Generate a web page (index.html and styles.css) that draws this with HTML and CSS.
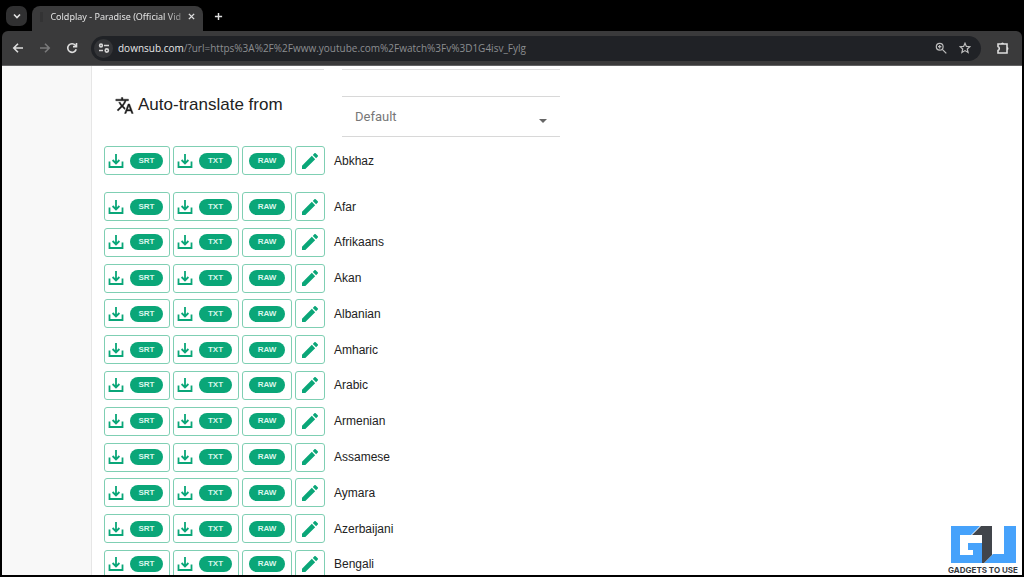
FILE: index.html
```html
<!DOCTYPE html>
<html lang="en">
<head>
<meta charset="utf-8">
<meta name="viewport" content="width=device-width, initial-scale=1">
<title>Coldplay - Paradise (Official Video)</title>
<link rel="stylesheet" href="styles.css">
<script src="app.js" defer></script>
</head>
<body>
<svg class="sprite" aria-hidden="true">
  <symbol id="i-download" viewBox="0 0 16 16"><path d="M1.500 8.500v5.500h13V8.500M8 1v9M4.600 7 8 10.400 11.400 7" fill="none" stroke="currentColor" stroke-width="1.8"/></symbol>
  <symbol id="i-pencil" viewBox="3 3 18 18"><path fill="currentColor" d="M3 17.25V21h3.75L17.81 9.94l-3.75-3.75L3 17.25zM20.71 7.04a1 1 0 0 0 0-1.41l-2.34-2.34a1 1 0 0 0-1.41 0l-1.83 1.83 3.75 3.75 1.83-1.83z"/></symbol>
</svg>
<div class="browser">
  <header class="tabs">
    <button class="tab-search" aria-label="Search tabs"><svg viewBox="0 0 10 10"><path d="m2 3.5 3 3 3-3"/></svg></button>
    <div class="tab">
      <span class="favicon"></span>
      <span class="tab-title">Coldplay - Paradise (Official Vid</span>
      <button class="plain" aria-label="Close tab"><svg class="x" viewBox="0 0 8 8"><path d="m1 1 6 6M7 1 1 7"/></svg></button>
    </div>
    <button class="plain new-tab" aria-label="New tab"><svg viewBox="0 0 10 10"><path d="M5 1v8M1 5h8"/></svg></button>
  </header>
  <nav class="toolbar">
    <button class="plain" aria-label="Back"><svg viewBox="0 0 12 12"><path d="M11 6H2M6 1.8 1.8 6 6 10.2"/></svg></button>
    <button class="plain dim" aria-label="Forward"><svg viewBox="0 0 12 12"><path d="M1 6h9M6 1.8 10.2 6 6 10.2"/></svg></button>
    <button class="plain" aria-label="Reload"><svg viewBox="0 0 12 12"><path d="M10.2 7.2A4.3 4.3 0 1 1 9.4 3.3L10 4"/><path d="M10.5 1v3.6H7" /></svg></button>
    <div class="address">
      <button class="site-info" aria-label="Site information"><svg viewBox="0 0 12 12"><circle cx="3" cy="3.5" r="1.4"/><path d="M6 3.5h5M1 8.5h4"/><circle cx="8.8" cy="8.5" r="1.6"/></svg></button>
      <a class="url" href="#"><b>downsub.com</b>/?url=https%3A%2F%2Fwww.youtube.com%2Fwatch%3Fv%3D1G4isv_Fylg</a>
      <button class="plain" aria-label="Zoom"><svg viewBox="0 0 12 12"><circle cx="4.7" cy="4.7" r="3.4"/><path d="m7.3 7.3 4 4M3 4.7h3.4M4.7 3v3.4"/></svg></button>
      <button class="plain" aria-label="Bookmark this page"><svg viewBox="0 0 12 12"><path d="m6 1.200 1.400 3.200 3.500.3-2.600 2.300.8 3.500L6 8.600l-3.100 1.900.8-3.500L1.100 4.700l3.500-.3z"/></svg></button>
    </div>
    <button class="plain" aria-label="Extensions"><svg class="puzzle" viewBox="0 0 14 14"><path d="M2 3h9v9H2V9.500q1.300-.3 1.300-2T2 5.500z"/><path class="knob" d="M5 3a1.500 1.500 0 0 1 3 0zM11 6a1.500 1.500 0 0 1 0 3z"/></svg></button>
  </nav>
  <div class="page">
    <aside class="gutter"></aside>
    <main class="content">
      <div class="rules"><span></span><span></span></div>
      <section class="head">
        <h1><svg viewBox="0 0 24 24"><path d="m12.870 15.070-2.540-2.510.03-.03A17.520 17.520 0 0 0 14.070 6H17V4h-7V2H8v2H1v2h11.170A15.700 15.700 0 0 1 9 11.350 15.650 15.650 0 0 1 6.690 8h-2a17.600 17.600 0 0 0 2.980 4.560l-5.090 5.020L4 19l5-5 3.110 3.110.76-2.040zM18.500 10h-2L12 22h2l1.120-3h4.750L21 22h2l-4.500-12zm-2.620 7 1.620-4.330L19.120 17h-3.240z"/></svg><label for="source">Auto-translate from</label></h1>
        <div class="select">
          <select id="source"><option>Default</option></select>
          <svg viewBox="0 0 8 4" aria-hidden="true"><path d="M0 0h8L4 4z"/></svg>
        </div>
      </section>
      <ul class="languages" id="first"></ul>
      <ul class="languages rest" id="rest"></ul>
    </main>
  </div>
</div>
<div class="watermark">
  <svg viewBox="0 0 65 38" aria-hidden="true"><path fill="#46a2fb" d="M0 0h29l-9 9H9v20h13v-5h-5v-7h14v20H0zM53 0h12v37H33l9-9h11z"/><path fill="#41454b" d="M30 0h11v29l-8 8h-2V9H21z"/></svg>
  <span>GADGETS TO USE</span>
</div>
</body>
</html>
```
FILE: styles.css
```css
* { box-sizing: border-box; }
body { margin: 0; background: #000; font-family: "Liberation Sans", Arial, sans-serif; color: #222; }
button { font: inherit; padding: 0; border: 0; cursor: pointer; }
.sprite { position: absolute; width: 0; height: 0; }

.browser { display: flex; flex-direction: column; height: 100vh; padding: 0 2px 2px; overflow: hidden; }
.browser header svg, .toolbar svg { display: block; width: 12px; height: 12px; fill: none; stroke: currentColor; stroke-width: 1.6; }

.tabs { display: flex; align-items: flex-end; height: 31px; padding-left: 4px; color: #e3e3e3; font-family: "Noto Sans", sans-serif; flex: none; }
.tab-search { display: grid; place-items: center; width: 21px; height: 20px; margin-bottom: 5px; border-radius: 7px; background: #303031; color: #e3e3e3; }
.browser .tab-search svg { width: 10px; height: 10px; stroke-width: 1.6; }
.tab { display: flex; align-items: center; gap: 7px; width: 171px; height: 25px; margin-left: 5px; padding: 0 8px; border-radius: 8px 8px 0 0; background: #3a3a3b; }
.favicon { width: 7px; height: 10px; background: #333334; }
.tab-title { flex: 1; margin-bottom: 4px; white-space: nowrap; font-size: 9px; line-height: 16px; -webkit-mask-image: linear-gradient(90deg, #000 88%, transparent 108%); mask-image: linear-gradient(90deg, #000 88%, transparent 108%); }
.tab > button, .favicon { margin-bottom: 4px; }
.plain { background: none; color: #dedede; }
.browser header .x { width: 7px; height: 7px; }
.new-tab { margin: 0 0 10px 11px; }
.browser .new-tab svg { width: 9px; height: 9px; }

.toolbar { display: flex; align-items: center; gap: 15px; height: 35px; padding: 0 12px 0 10px; background: #3a3a3b; border-radius: 6px 6px 0 0; border-bottom: 1px solid #626263; flex: none; }
.dim { color: #7a7a7b; }
.address { display: flex; flex: 1; align-items: center; gap: 12px; height: 25px; margin-left: -2px; padding: 0 10px 0 3px; border-radius: 13px; background: #202226; }
.address .plain { color: #bdbdbd; }
.browser .address .plain svg { width: 12px; height: 12px; stroke-width: 1.2; }
.site-info { display: grid; place-items: center; width: 19px; height: 19px; border-radius: 50%; background: #343538; color: #d6d6d6; }
.url { flex: 1; margin-left: -7px; overflow: hidden; color: #8c8e91; font-family: "Open Sans", "Noto Sans", sans-serif; font-size: 10px; line-height: 18px; text-decoration: none; white-space: nowrap; }
.url b { color: #e6e6e6; font-weight: 400; }
.browser .toolbar .puzzle { width: 14px; height: 14px; }
.puzzle .knob { fill: currentColor; stroke: none; }

.page { display: flex; flex: 1; min-height: 0; background: #fff; }
.gutter { flex: 0 0 90px; background: #f8f8f8; border-right: 1px solid #e6e6e6; }
.content { display: flex; flex: 1; flex-direction: column; min-width: 0; padding: 3px 0 0 12px; overflow: hidden; }
.rules, .head { display: grid; grid-template-columns: 220px 218px; column-gap: 18px; flex: none; }
.rules span { height: 1px; background: #e0e0e0; }
.head { margin-top: 26px; }
.head h1 { display: flex; gap: 4px; height: 18px; margin: 0; padding-left: 11px; font-size: 17px; font-weight: 400; line-height: 18px; white-space: nowrap; }
.head h1 svg { width: 19px; height: 19px; fill: #1c1c1c; stroke: #1c1c1c; stroke-width: 0.5; }
.select { position: relative; border: solid #d8d8d8; border-width: 1px 0; }
.select select { display: block; width: 100%; height: 39px; padding: 0 13px; border: 0; background: transparent; appearance: none; color: #777; font: 13px/20px Roboto, sans-serif; }
.select svg { position: absolute; right: 13px; top: 22px; width: 8px; height: 4px; fill: #666; pointer-events: none; }

.languages { display: flex; flex-direction: column; gap: 6px; margin: 9px 0 0; padding: 0; list-style: none; }
.rest { flex: 1; justify-content: space-between; margin: 17px 0 -4px; }
.languages li { display: flex; align-items: center; gap: 3px; height: 29px; flex: none; font-size: 12px; line-height: 16px; }
.languages li span { margin-left: 6px; }
.action { display: flex; align-items: center; justify-content: center; gap: 6px; height: 29px; padding: 0 6px 0 3px; border: 1px solid #7fcfb3; border-radius: 3px; background: #fff; color: #0aa678; }
.action svg { width: 16px; height: 16px; }
.action i { width: 33px; height: 16px; border-radius: 8px; background: #0aa678; color: #d9f6eb; font-size: 8px; font-style: normal; font-weight: 700; line-height: 16px; text-align: center; }
.raw { padding: 0 6px; }
.raw i { width: 36px; }
.edit { width: 30px; padding: 0; }

.watermark { position: absolute; right: 4px; bottom: 2px; width: 74px; text-align: center; color: #35383c; }
.watermark svg { display: block; width: 65px; height: 38px; margin: 0 auto 2px; }
.watermark span { display: block; font: 700 8px/9px Inter, sans-serif; white-space: nowrap; }
```
FILE: app.js
```js
const languages = ["Abkhaz", "Afar", "Afrikaans", "Akan", "Albanian", "Amharic", "Arabic",
  "Armenian", "Assamese", "Aymara", "Azerbaijani", "Bengali"];

const icon = (name) => `<svg aria-hidden="true"><use href="#i-${name}"/></svg>`;
const row = (name) => `<li>
  <button class="action">${icon("download")}<i>SRT</i></button>
  <button class="action">${icon("download")}<i>TXT</i></button>
  <button class="action raw"><i>RAW</i></button>
  <button class="action edit" aria-label="Edit ${name}">${icon("pencil")}</button>
  <span>${name}</span>
</li>`;

document.getElementById("first").innerHTML = row(languages[0]);
document.getElementById("rest").innerHTML = languages.slice(1).map(row).join("");
```
